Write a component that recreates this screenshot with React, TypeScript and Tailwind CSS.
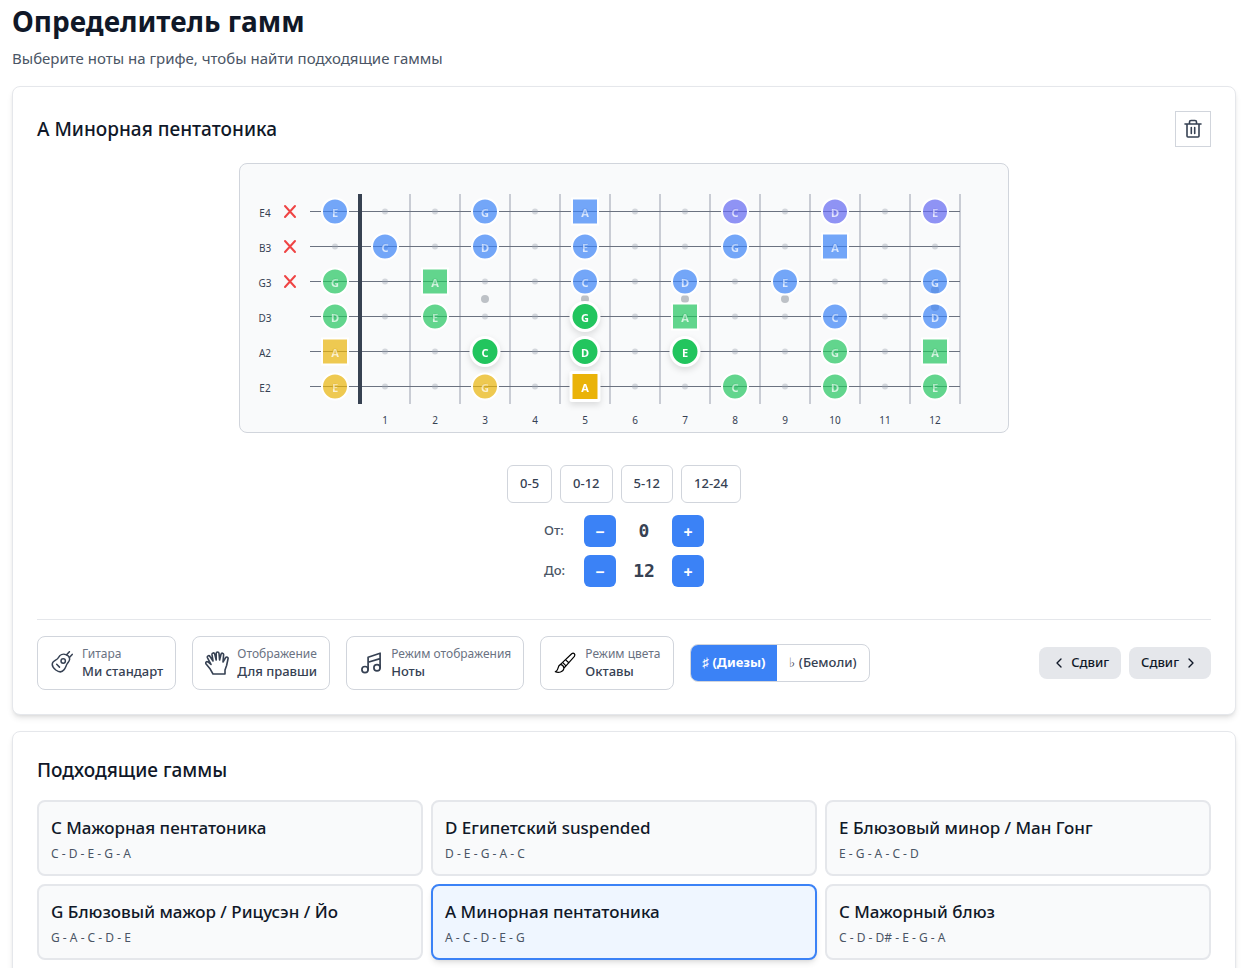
import React from 'react';
import { ChevronLeft, ChevronRight } from 'lucide-react';
import clsx from 'clsx';

type Note = { string: number; fret: number; name: string; color: string; active?: boolean };

const YELLOW = '#eab308';
const GREEN = '#22c55e';
const BLUE = '#3b82f6';
const INDIGO = '#6366f1';

const strings = [
  { name: 'E4', muted: true },
  { name: 'B3', muted: true },
  { name: 'G3', muted: true },
  { name: 'D3', muted: false },
  { name: 'A2', muted: false },
  { name: 'E2', muted: false },
];

const frets = [0, 1, 2, 3, 4, 5, 6, 7, 8, 9, 10, 11, 12];

const notes: Note[] = [
  { string: 0, fret: 0, name: 'E', color: BLUE },
  { string: 0, fret: 3, name: 'G', color: BLUE },
  { string: 0, fret: 5, name: 'A', color: BLUE },
  { string: 0, fret: 8, name: 'C', color: INDIGO },
  { string: 0, fret: 10, name: 'D', color: INDIGO },
  { string: 0, fret: 12, name: 'E', color: INDIGO },
  { string: 1, fret: 1, name: 'C', color: BLUE },
  { string: 1, fret: 3, name: 'D', color: BLUE },
  { string: 1, fret: 5, name: 'E', color: BLUE },
  { string: 1, fret: 8, name: 'G', color: BLUE },
  { string: 1, fret: 10, name: 'A', color: BLUE },
  { string: 2, fret: 0, name: 'G', color: GREEN },
  { string: 2, fret: 2, name: 'A', color: GREEN },
  { string: 2, fret: 5, name: 'C', color: BLUE },
  { string: 2, fret: 7, name: 'D', color: BLUE },
  { string: 2, fret: 9, name: 'E', color: BLUE },
  { string: 2, fret: 12, name: 'G', color: BLUE },
  { string: 3, fret: 0, name: 'D', color: GREEN },
  { string: 3, fret: 2, name: 'E', color: GREEN },
  { string: 3, fret: 5, name: 'G', color: GREEN, active: true },
  { string: 3, fret: 7, name: 'A', color: GREEN },
  { string: 3, fret: 10, name: 'C', color: BLUE },
  { string: 3, fret: 12, name: 'D', color: BLUE },
  { string: 4, fret: 0, name: 'A', color: YELLOW },
  { string: 4, fret: 3, name: 'C', color: GREEN, active: true },
  { string: 4, fret: 5, name: 'D', color: GREEN, active: true },
  { string: 4, fret: 7, name: 'E', color: GREEN, active: true },
  { string: 4, fret: 10, name: 'G', color: GREEN },
  { string: 4, fret: 12, name: 'A', color: GREEN },
  { string: 5, fret: 0, name: 'E', color: YELLOW },
  { string: 5, fret: 3, name: 'G', color: YELLOW },
  { string: 5, fret: 5, name: 'A', color: YELLOW, active: true },
  { string: 5, fret: 8, name: 'C', color: GREEN },
  { string: 5, fret: 10, name: 'D', color: GREEN },
  { string: 5, fret: 12, name: 'E', color: GREEN },
];

const inlays = [
  [3, 135],
  [5, 135],
  [7, 135],
  [9, 135],
  [12, 126],
  [12, 143],
];

const scales = [
  { name: 'C Мажорная пентатоника', notes: 'C - D - E - G - A' },
  { name: 'D Египетский suspended', notes: 'D - E - G - A - C' },
  { name: 'E Блюзовый минор / Ман Гонг', notes: 'E - G - A - C - D' },
  { name: 'G Блюзовый мажор / Рицусэн / Йо', notes: 'G - A - C - D - E' },
  { name: 'A Минорная пентатоника', notes: 'A - C - D - E - G', selected: true },
  { name: 'C Мажорный блюз', notes: 'C - D - D# - E - G - A' },
];

const noteX = (fret: number) => 95 + fret * 50;
const stringY = (i: number) => 47.5 + i * 35;

const NoteMarker = ({ note }: { note: Note }) => {
  const x = noteX(note.fret);
  const y = stringY(note.string);
  const r = note.active ? 14 : 13;
  const style = {
    fill: note.color,
    fillOpacity: note.active ? 1 : 0.7,
    stroke: 'white',
    strokeWidth: note.active ? 3 : 2,
  };

  return (
    <g className={note.active ? 'drop-shadow-md' : undefined}>
      {note.name === 'A' ? (
        <rect x={x - r} y={y - r} width={r * 2} height={r * 2} rx={note.active ? 1 : 0} {...style} />
      ) : (
        <circle cx={x} cy={y} r={r} {...style} />
      )}
      <text
        x={x}
        y={y + 5}
        textAnchor="middle"
        className="fill-white text-[11px] font-bold"
        opacity={note.active ? 1 : 0.75}
      >
        {note.name}
      </text>
      {!note.active && <circle cx={x} cy={y} r={3} fill={note.color} fillOpacity={0.2} />}
    </g>
  );
};

const Fretboard = () => (
  <div className="mx-auto w-fit max-w-full rounded-lg border border-gray-300 bg-gray-50">
    <svg viewBox="0 0 768 268" width={768} height={268} className="block max-w-full" role="img" aria-label="Гриф">
      {frets.slice(1).map(f => (
        <line key={f} x1={120 + f * 50} x2={120 + f * 50} y1={30} y2={240} stroke="#c9ccd4" strokeWidth={2} />
      ))}
      {strings.map((s, i) => (
        <line key={s.name} x1={70} x2={720} y1={stringY(i)} y2={stringY(i)} stroke="#6b7280" />
      ))}
      <line x1={120} x2={120} y1={30} y2={240} stroke="#374151" strokeWidth={4} />
      {inlays.map(([f, y]) => (
        <circle key={`${f}-${y}`} cx={noteX(f)} cy={y} r={4} fill="#bdc1c6" />
      ))}
      {strings.map((s, i) =>
        frets.map(f => <circle key={`${s.name}-${f}`} cx={noteX(f)} cy={stringY(i)} r={3} fill="#9ca3af" fillOpacity={0.4} />)
      )}
      {strings.map((s, i) => (
        <g key={s.name}>
          <text x={25} y={stringY(i) + 5} textAnchor="middle" className="fill-gray-700 text-[10px]">{s.name}</text>
          {s.muted && (
            <path d={`M45 ${stringY(i) - 5.5}l10 11m0 -11l-10 11`} stroke="#ef4444" strokeWidth={2} strokeLinecap="round" />
          )}
        </g>
      ))}
      {notes.map(n => <NoteMarker key={`${n.string}-${n.fret}`} note={n} />)}
      {frets.slice(1).map(f => (
        <text key={f} x={noteX(f)} y={260} textAnchor="middle" className="fill-gray-700 text-[10px]">{f}</text>
      ))}
    </svg>
  </div>
);

const TrashIcon = () => (
  <svg viewBox="0 0 20 20" className="size-5" fill="none" stroke="currentColor" strokeWidth={1.6} strokeLinecap="round" strokeLinejoin="round">
    <path d="M2 5H18M4 5V17Q4 18 5 18H15Q16 18 16 17V5M6.5 5V3Q6.5 1.5 8 1.5H12Q13.5 1.5 13.5 3V5M8.3 8.5V14.5M11.7 8.5V14.5" />
  </svg>
);

const GuitarIcon = () => (
  <svg viewBox="0 0 24 24" className="size-6 shrink-0" fill="none" stroke="currentColor" strokeWidth={1.5} strokeLinecap="round" strokeLinejoin="round">
    <path d="M8.5 6.5C9.8 3.8 13 2.6 15.8 3.6C18.2 4.4 19.8 6.2 19.6 8.5C19.4 10.2 18.4 11 17.4 12.4C16 14.4 15.8 16.5 14 18.8C12 21.4 8.7 21.2 5.8 19C2.8 16.5 1.5 13.4 3 11.2C4.4 9.1 7.3 9 8.5 6.5Z" />
    <circle cx="13.2" cy="10" r="2.2" />
    <path d="M6.7 13.3l2.8 2.8M16.6 3.7l2.8-3M19.4 6.4l2.8-3" />
  </svg>
);

const HandIcon = () => (
  <svg viewBox="0 0 24 24" className="size-6 shrink-0" fill="none" stroke="currentColor" strokeWidth={1.6} strokeLinecap="round" strokeLinejoin="round">
    <path d="M8 23L4.8 17.4L1.1 13C.2 11.5 1.5 9.9 3 11L6 13.4L2.5 6.8C1.7 5 4 3.8 5 5.5L8 10L7 3.7C6.8 1.7 9.2 1.2 9.7 3.1L11.2 9L11.2 2.4C11.3.5 13.8.5 14 2.4L14.6 9L16 3.3C16.5 1.5 18.8 2 18.6 3.9L18 11L20.5 6.8C21.5 5.3 23.6 6.3 23 8L21.6 14.5L20 19V23Z" />
  </svg>
);

const NotesIcon = () => (
  <svg viewBox="0 0 24 24" className="size-6 shrink-0" fill="none" stroke="currentColor" strokeWidth={1.7} strokeLinecap="round" strokeLinejoin="round">
    <circle cx="6" cy="18.6" r="3.1" />
    <circle cx="18" cy="16.8" r="3.1" />
    <path d="M9.1 18.6V6.3L21.1 2.2V16.8M9.1 11.3L21.1 7.6" />
  </svg>
);

const BrushIcon = () => (
  <svg viewBox="0 0 24 24" className="size-6 shrink-0 text-black" fill="none" stroke="currentColor" strokeWidth={1.2} strokeLinecap="round" strokeLinejoin="round">
    <path d="M9.6 11.4L18.7 2.7C20.7 1.3 22.8 3.4 21.4 5.4L13 14.8M12.4 8.6L15.8 11.8M9.6 11.4L13 14.8L11 17M9.6 11.4L7.5 13.4C5.5 14.2 5.2 16.2 4.8 17.8C4.4 19.3 3.3 20.2 2.3 20.8C5.3 21.8 10.4 21.6 11 17C10.5 15 9.5 13.8 7.5 13.4" />
  </svg>
);

const options = [
  { label: 'Гитара', value: 'Ми стандарт', icon: <GuitarIcon /> },
  { label: 'Отображение', value: 'Для правши', icon: <HandIcon /> },
  { label: 'Режим отображения', value: 'Ноты', icon: <NotesIcon /> },
  { label: 'Режим цвета', value: 'Октавы', icon: <BrushIcon /> },
];

const Stepper = ({ label, value }: { label: string; value: number }) => (
  <div className="flex items-center gap-2" role="group" aria-label={label}>
    <span className="w-8 text-[13px] font-medium text-gray-600">{label}</span>
    <button className="size-8 rounded-md bg-[#3b82f6] pt-0.5 text-base font-bold text-white" aria-label="Меньше">−</button>
    <output className="w-10 text-center font-['DejaVu_Sans_Mono',monospace] text-lg font-bold text-gray-700">{value}</output>
    <button className="size-8 rounded-md bg-[#3b82f6] pt-0.5 text-base font-bold text-white" aria-label="Больше">+</button>
  </div>
);

const App = () => {
  return (
    <main className="min-h-screen bg-white py-1 pr-[13px] pl-3 font-['Noto_Sans',sans-serif] text-gray-900">
      <header className="mb-4">
        <h1 className="text-[28px] leading-[34px] font-bold">Определитель гамм</h1>
        <p className="mt-2 text-[15px] leading-6 text-gray-600">Выберите ноты на грифе, чтобы найти подходящие гаммы</p>
      </header>

      <section className="mb-4 rounded-lg border border-gray-200 bg-white p-6 shadow-md">
        <div className="mb-4 flex items-center justify-between">
          <h2 className="text-[19px] leading-7 font-medium">A Минорная пентатоника</h2>
          <button className="flex size-9 items-center justify-center border border-gray-300 text-gray-700" aria-label="Очистить">
            <TrashIcon />
          </button>
        </div>

        <Fretboard />

        <div className="mt-8 flex justify-center gap-2">
          {['0-5', '0-12', '5-12', '12-24'].map(range => (
            <button key={range} className="h-[38px] rounded-md border border-gray-300 px-3 text-[13px] font-medium text-gray-700">
              {range}
            </button>
          ))}
        </div>
        <div className="mt-3 flex flex-col items-center gap-2">
          <Stepper label="От:" value={0} />
          <Stepper label="До:" value={12} />
        </div>

        <div className="mt-8 flex flex-wrap items-center gap-4 border-t border-gray-200 pt-4">
          {options.map(o => (
            <button key={o.label} className="flex h-[54px] items-center gap-2 rounded-lg border border-gray-300 px-3 text-left text-gray-700">
              {o.icon}
              <span className="flex flex-col">
                <span className="text-xs leading-4 text-gray-500">{o.label}</span>
                <span className="text-[13px] leading-[18px] font-medium">{o.value}</span>
              </span>
            </button>
          ))}
          <div className="flex h-[38px] overflow-hidden rounded-lg border border-gray-300 text-[13px]">
            <button className="bg-[#3b82f6] px-3 font-bold text-white">♯ (Диезы)</button>
            <button className="px-3 font-medium text-gray-700">♭ (Бемоли)</button>
          </div>
          <div className="ml-auto flex gap-2">
            <button className="flex h-8 items-center gap-1 rounded-lg bg-gray-200 px-3 text-[13px] font-medium">
              <ChevronLeft size={16} />
              Сдвиг
            </button>
            <button className="flex h-8 items-center gap-1 rounded-lg bg-gray-200 px-3 text-[13px] font-medium">
              Сдвиг
              <ChevronRight size={16} />
            </button>
          </div>
        </div>
      </section>

      <section className="rounded-lg border border-gray-200 bg-white p-6 shadow-md">
        <h2 className="mb-4 text-[19px] leading-7 font-medium">Подходящие гаммы</h2>
        <div className="grid grid-cols-1 gap-2 md:grid-cols-3">
          {scales.map(s => (
            <button
              key={s.name}
              className={clsx(
                'h-[76px] rounded-lg border-2 px-3 pt-1 text-left',
                s.selected ? 'border-[#3b82f6] bg-blue-50 shadow-md' : 'border-gray-200 bg-gray-50'
              )}
            >
              <span className="block text-[17px] leading-6 font-medium">{s.name}</span>
              <span className="mt-1 block text-xs leading-5 text-gray-600">{s.notes}</span>
            </button>
          ))}
        </div>
      </section>
    </main>
  );
};

export default App;
